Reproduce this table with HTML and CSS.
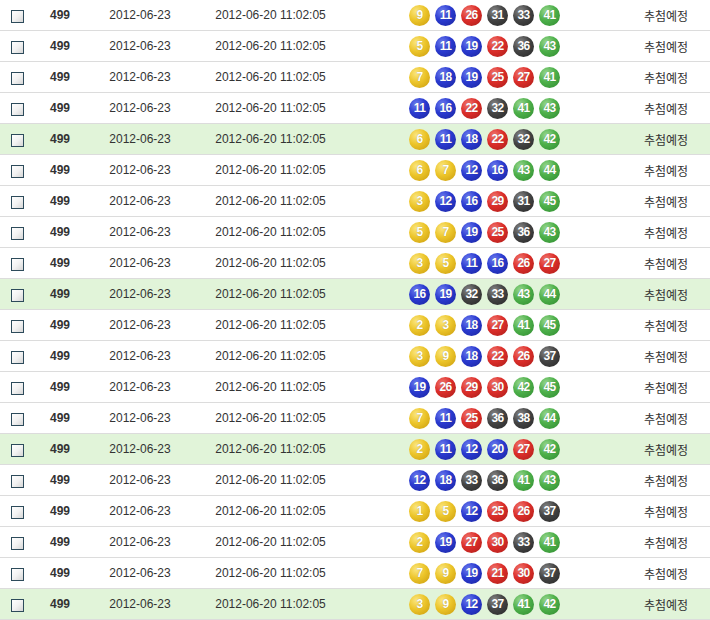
FILE: index.html
```html
<!DOCTYPE html>
<html lang="ko">
<head>
<meta charset="utf-8">
<title>추첨 목록</title>
<link rel="stylesheet" href="styles.css">
</head>
<body>
<table class="list">
<colgroup><col class="c-chk"><col class="c-no"><col class="c-date"><col class="c-reg"><col class="c-balls"><col class="c-state"></colgroup>
<tbody>
<tr><td><input type="checkbox" class="chk"></td><td class="no">499</td><td>2012-06-23</td><td>2012-06-20 11:02:05</td><td><div class="balls"><span class="ball y">9</span><span class="ball b">11</span><span class="ball r">26</span><span class="ball k">31</span><span class="ball k">33</span><span class="ball g">41</span></div></td><td>추첨예정</td></tr>
<tr><td><input type="checkbox" class="chk"></td><td class="no">499</td><td>2012-06-23</td><td>2012-06-20 11:02:05</td><td><div class="balls"><span class="ball y">5</span><span class="ball b">11</span><span class="ball b">19</span><span class="ball r">22</span><span class="ball k">36</span><span class="ball g">43</span></div></td><td>추첨예정</td></tr>
<tr><td><input type="checkbox" class="chk"></td><td class="no">499</td><td>2012-06-23</td><td>2012-06-20 11:02:05</td><td><div class="balls"><span class="ball y">7</span><span class="ball b">18</span><span class="ball b">19</span><span class="ball r">25</span><span class="ball r">27</span><span class="ball g">41</span></div></td><td>추첨예정</td></tr>
<tr><td><input type="checkbox" class="chk"></td><td class="no">499</td><td>2012-06-23</td><td>2012-06-20 11:02:05</td><td><div class="balls"><span class="ball b">11</span><span class="ball b">16</span><span class="ball r">22</span><span class="ball k">32</span><span class="ball g">41</span><span class="ball g">43</span></div></td><td>추첨예정</td></tr>
<tr class="hl"><td><input type="checkbox" class="chk"></td><td class="no">499</td><td>2012-06-23</td><td>2012-06-20 11:02:05</td><td><div class="balls"><span class="ball y">6</span><span class="ball b">11</span><span class="ball b">18</span><span class="ball r">22</span><span class="ball k">32</span><span class="ball g">42</span></div></td><td>추첨예정</td></tr>
<tr><td><input type="checkbox" class="chk"></td><td class="no">499</td><td>2012-06-23</td><td>2012-06-20 11:02:05</td><td><div class="balls"><span class="ball y">6</span><span class="ball y">7</span><span class="ball b">12</span><span class="ball b">16</span><span class="ball g">43</span><span class="ball g">44</span></div></td><td>추첨예정</td></tr>
<tr><td><input type="checkbox" class="chk"></td><td class="no">499</td><td>2012-06-23</td><td>2012-06-20 11:02:05</td><td><div class="balls"><span class="ball y">3</span><span class="ball b">12</span><span class="ball b">16</span><span class="ball r">29</span><span class="ball k">31</span><span class="ball g">45</span></div></td><td>추첨예정</td></tr>
<tr><td><input type="checkbox" class="chk"></td><td class="no">499</td><td>2012-06-23</td><td>2012-06-20 11:02:05</td><td><div class="balls"><span class="ball y">5</span><span class="ball y">7</span><span class="ball b">19</span><span class="ball r">25</span><span class="ball k">36</span><span class="ball g">43</span></div></td><td>추첨예정</td></tr>
<tr><td><input type="checkbox" class="chk"></td><td class="no">499</td><td>2012-06-23</td><td>2012-06-20 11:02:05</td><td><div class="balls"><span class="ball y">3</span><span class="ball y">5</span><span class="ball b">11</span><span class="ball b">16</span><span class="ball r">26</span><span class="ball r">27</span></div></td><td>추첨예정</td></tr>
<tr class="hl"><td><input type="checkbox" class="chk"></td><td class="no">499</td><td>2012-06-23</td><td>2012-06-20 11:02:05</td><td><div class="balls"><span class="ball b">16</span><span class="ball b">19</span><span class="ball k">32</span><span class="ball k">33</span><span class="ball g">43</span><span class="ball g">44</span></div></td><td>추첨예정</td></tr>
<tr><td><input type="checkbox" class="chk"></td><td class="no">499</td><td>2012-06-23</td><td>2012-06-20 11:02:05</td><td><div class="balls"><span class="ball y">2</span><span class="ball y">3</span><span class="ball b">18</span><span class="ball r">27</span><span class="ball g">41</span><span class="ball g">45</span></div></td><td>추첨예정</td></tr>
<tr><td><input type="checkbox" class="chk"></td><td class="no">499</td><td>2012-06-23</td><td>2012-06-20 11:02:05</td><td><div class="balls"><span class="ball y">3</span><span class="ball y">9</span><span class="ball b">18</span><span class="ball r">22</span><span class="ball r">26</span><span class="ball k">37</span></div></td><td>추첨예정</td></tr>
<tr><td><input type="checkbox" class="chk"></td><td class="no">499</td><td>2012-06-23</td><td>2012-06-20 11:02:05</td><td><div class="balls"><span class="ball b">19</span><span class="ball r">26</span><span class="ball r">29</span><span class="ball r">30</span><span class="ball g">42</span><span class="ball g">45</span></div></td><td>추첨예정</td></tr>
<tr><td><input type="checkbox" class="chk"></td><td class="no">499</td><td>2012-06-23</td><td>2012-06-20 11:02:05</td><td><div class="balls"><span class="ball y">7</span><span class="ball b">11</span><span class="ball r">25</span><span class="ball k">36</span><span class="ball k">38</span><span class="ball g">44</span></div></td><td>추첨예정</td></tr>
<tr class="hl"><td><input type="checkbox" class="chk"></td><td class="no">499</td><td>2012-06-23</td><td>2012-06-20 11:02:05</td><td><div class="balls"><span class="ball y">2</span><span class="ball b">11</span><span class="ball b">12</span><span class="ball b">20</span><span class="ball r">27</span><span class="ball g">42</span></div></td><td>추첨예정</td></tr>
<tr><td><input type="checkbox" class="chk"></td><td class="no">499</td><td>2012-06-23</td><td>2012-06-20 11:02:05</td><td><div class="balls"><span class="ball b">12</span><span class="ball b">18</span><span class="ball k">33</span><span class="ball k">36</span><span class="ball g">41</span><span class="ball g">43</span></div></td><td>추첨예정</td></tr>
<tr><td><input type="checkbox" class="chk"></td><td class="no">499</td><td>2012-06-23</td><td>2012-06-20 11:02:05</td><td><div class="balls"><span class="ball y">1</span><span class="ball y">5</span><span class="ball b">12</span><span class="ball r">25</span><span class="ball r">26</span><span class="ball k">37</span></div></td><td>추첨예정</td></tr>
<tr><td><input type="checkbox" class="chk"></td><td class="no">499</td><td>2012-06-23</td><td>2012-06-20 11:02:05</td><td><div class="balls"><span class="ball y">2</span><span class="ball b">19</span><span class="ball r">27</span><span class="ball r">30</span><span class="ball k">33</span><span class="ball g">41</span></div></td><td>추첨예정</td></tr>
<tr><td><input type="checkbox" class="chk"></td><td class="no">499</td><td>2012-06-23</td><td>2012-06-20 11:02:05</td><td><div class="balls"><span class="ball y">7</span><span class="ball y">9</span><span class="ball b">19</span><span class="ball r">21</span><span class="ball r">30</span><span class="ball k">37</span></div></td><td>추첨예정</td></tr>
<tr class="hl"><td><input type="checkbox" class="chk"></td><td class="no">499</td><td>2012-06-23</td><td>2012-06-20 11:02:05</td><td><div class="balls"><span class="ball y">3</span><span class="ball y">9</span><span class="ball b">12</span><span class="ball k">37</span><span class="ball g">41</span><span class="ball g">42</span></div></td><td>추첨예정</td></tr>
</tbody>
</table>
</body>
</html>
```

FILE: styles.css
```css
html, body {
  margin: 0;
  padding: 0;
  background: #fff;
}
body {
  font-family: "Liberation Sans", "Noto Sans CJK KR", sans-serif;
  font-size: 12px;
  color: #333;
}
.list {
  width: 710px;
  border-collapse: collapse;
  table-layout: fixed;
}
.c-chk { width: 35px; }
.c-no { width: 50px; }
.c-date { width: 110px; }
.c-reg { width: 151px; }
.c-balls { width: 276px; }
.c-state { width: 88px; }
.list td {
  height: 30px;
  padding: 0;
  text-align: center;
  vertical-align: middle;
  border-bottom: 1px solid #dcdcdc;
  white-space: nowrap;
}
.list tr.hl td {
  background: #e1f4d9;
}
.no {
  font-weight: bold;
  color: #333;
}
.chk {
  appearance: none;
  -webkit-appearance: none;
  display: block;
  margin: 2px auto 0 11px;
  width: 13px;
  height: 13px;
  box-sizing: border-box;
  border: 1px solid #2d4b5b;
  background: linear-gradient(135deg, #ffffff 0%, #f2f2f2 50%, #d6d6d6 100%);
}
.balls {
  display: flex;
  justify-content: flex-start;
  gap: 5px;
  padding-left: 63px;
}
.ball {
  flex: none;
  width: 21px;
  height: 21px;
  border-radius: 50%;
  display: flex;
  align-items: center;
  justify-content: center;
  font-family: "Liberation Sans", sans-serif;
  font-weight: bold;
  font-size: 12px;
  color: #fff;
  letter-spacing: -0.6px;
  text-shadow: 0 0 1px rgba(0,0,0,0.35);
}
.ball.y { background: radial-gradient(circle at 35% 30%, #fbe680 0%, #ecc52a 45%, #c99a0c 100%); }
.ball.b { background: radial-gradient(circle at 35% 30%, #6f7ff0 0%, #2a3ad0 45%, #1a249c 100%); }
.ball.r { background: radial-gradient(circle at 35% 30%, #f27a72 0%, #dc2e2a 45%, #a81c18 100%); }
.ball.k { background: radial-gradient(circle at 35% 30%, #8a8a8a 0%, #444 45%, #262626 100%); }
.ball.g { background: radial-gradient(circle at 35% 30%, #9ad890 0%, #4db04a 45%, #2f8a30 100%); }
```
